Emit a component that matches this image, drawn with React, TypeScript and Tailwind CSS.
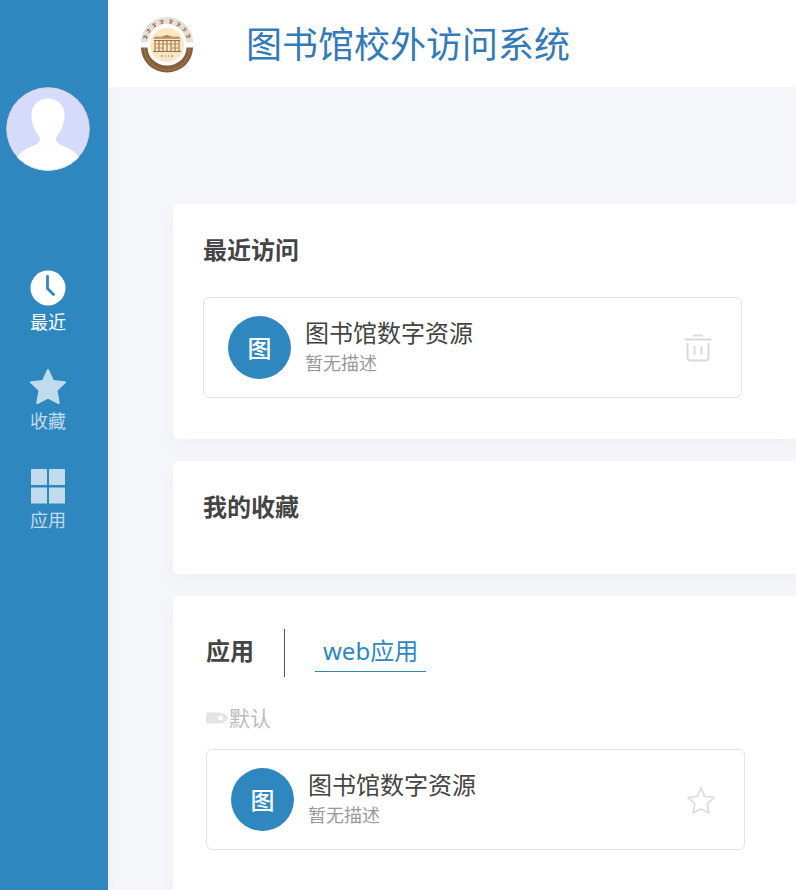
import type { ReactNode } from "react";

interface Resource {
  name: string;
  description: string;
}

const resource: Resource = { name: "图书馆数字资源", description: "暂无描述" };

function ClockIcon() {
  return (
    <svg className="size-9" viewBox="0 0 36 36">
      <circle cx="18" cy="18" r="17.5" fill="currentColor" />
      <path d="M17.5 6.500v12l6 6" fill="none" stroke="#2e88bf" strokeWidth="2.8" strokeLinecap="round" strokeLinejoin="round" />
    </svg>
  );
}

function StarIcon() {
  return (
    <svg className="size-9" viewBox="0 0 36 36" fill="currentColor" stroke="currentColor" strokeWidth="2" strokeLinejoin="round">
      <path d="M18 .8l5 11.200 12 1.300-8.500 8 2.200 12.700L18 28.500 7.300 34l2.200-12.700L1 13.300 13 12z" />
    </svg>
  );
}

function GridIcon() {
  return (
    <svg className="size-9" viewBox="0 0 36 36" fill="currentColor">
      <rect x="1" y="1" width="16" height="16" rx="0.5" />
      <rect x="19" y="1" width="16" height="16" rx="0.5" />
      <rect x="1" y="19.5" width="16" height="16" rx="0.5" />
      <rect x="19" y="19.5" width="16" height="16" rx="0.5" />
    </svg>
  );
}

function TrashIcon() {
  return (
    <svg className="size-7" viewBox="0 0 28 28" fill="none" stroke="#dadada" strokeWidth="2">
      <path d="M9 1.500h10M.5 5.500h27" strokeWidth="2.200" />
      <path d="M3.500 9v14.500a3 3 0 0 0 3 3h15a3 3 0 0 0 3-3V9M10.500 12v8.500M17.500 12v8.500" />
    </svg>
  );
}

function StarOutlineIcon() {
  return (
    <svg className="size-7" viewBox="0 0 28 28" fill="none" stroke="#dcdcdc" strokeWidth="1.7" strokeLinejoin="round">
      <path d="M14 2l3.700 8.300 9.300 1.200-6.800 6.300 1.700 9-7.900-3.800-7.900 3.800 1.700-9L1 11.500l9.300-1.200z" />
    </svg>
  );
}

function TagIcon() {
  return (
    <svg className="h-3 w-[23px]" viewBox="0 0 23 12">
      <path d="M1.500 .5h13.500c2 0 7 3.500 7 5.500s-5 5.500-7 5.500H1.500A1.500 1.500 0 0 1 0 10V2A1.500 1.500 0 0 1 1.500 .5z" fill="#e4e4e4" />
      <circle cx="14.500" cy="6" r="2.500" fill="#fff" />
    </svg>
  );
}

function Avatar() {
  return (
    <svg className="size-[84px] rounded-full" viewBox="0 0 84 84" role="img" aria-label="avatar">
      <circle cx="42" cy="42" r="41.7" fill="#d6dbfb" />
      <path d="M42 11.500c-10 0-16.500 7-16.500 17 0 8 3 15 7 19.500 1.500 2 2 4 1 6-1.500 3-5 4.500-9 6C19 62 14 66 10.500 70 18 79 30 84 42 84s24-5 31.500-14c-3.500-4-8.500-8-14-10-4-1.500-7.500-3-9-6-1-2-.5-4 1-6 4-4.500 7-11.500 7-19.500 0-10-6.500-17-16.500-17z" fill="#fff" />
      <circle cx="42" cy="42" r="41.6" fill="none" stroke="#c9c7a2" strokeWidth="0.7" />
    </svg>
  );
}

const sealMarks = [-72, -54, -34, -13, 10, 31, 51, 70];

function Seal() {
  return (
    <svg className="h-14 w-[54px]" viewBox="0 0 54 56" role="img" aria-label="logo">
      <path d="M1 25.500a26 25.500 0 0 1 52 0h-7a19 18.500 0 0 0-38 0z" fill="#e6dfd8" />
      <path d="M1 30.500a26 25 0 0 0 52 0h-6.500a19.500 18 0 0 1-39 0z" fill="#85603a" />
      <path d="M4.500 31a22.500 22 0 0 0 45 0" fill="none" stroke="#a88760" strokeWidth="1.3" strokeDasharray="1.5 1.5" />
      {sealMarks.map((angle) => (
        <g key={angle} transform={`rotate(${angle} 27 27)`} stroke="#8f7358" strokeWidth="0.9">
          <path d="M25 3l4 .6M27 2v4.500M25.300 6l3.200-1" fill="none" />
        </g>
      ))}
      <circle cx="27" cy="28" r="17" fill="#fbe7c6" />
      {/* library building */}
      <path d="M13 22l2-2.500h24l2 2.500z" fill="#c29b70" />
      <path d="M21.500 20l5.500-2 5.500 2z" fill="#a67a4b" />
      <path d="M14 23.500h26M13 34.500h28M15 23.500v11M19 23.500v11M23 23.500v11M27 23.500v11M31 23.500v11M35 23.500v11M39 23.500v11" fill="none" stroke="#9b7145" strokeWidth="1.1" />
      <path d="M16 27h22M16 31h7M31 31h7" fill="none" stroke="#b98f61" />
      <path d="M21 39h2M25 39h1M28 39h1M31 39h2" stroke="#9b7145" strokeWidth="1.2" />
    </svg>
  );
}

const navItems = [
  { label: "最近", icon: <ClockIcon />, active: true },
  { label: "收藏", icon: <StarIcon />, active: false },
  { label: "应用", icon: <GridIcon />, active: false },
];

function Panel({ className, children }: { className: string; children: ReactNode }) {
  return (
    <section className={`bg-white shadow-[0_8px_20px_rgba(60,60,100,0.03)] ${className}`}>
      {children}
    </section>
  );
}

function ResourceCard({ item, action, label }: { item: Resource; action: ReactNode; label: string }) {
  return (
    <div className="flex w-full max-w-[539px] items-center rounded-md border border-[#e4e4e4] py-[18px] pr-[29px] pl-6">
      <span className="flex size-[63px] shrink-0 items-center justify-center rounded-full bg-[#2e88bf] text-2xl leading-6 font-medium text-white">
        图
      </span>
      <div className="ml-[14px] flex-1 pb-[2px]">
        <h3 className="text-2xl leading-8 text-[#444]">{item.name}</h3>
        <p className="text-lg leading-7 text-[#999]">{item.description}</p>
      </div>
      <button type="button" aria-label={label} className="cursor-pointer">
        {action}
      </button>
    </div>
  );
}

export default function App() {
  return (
    <div className="flex min-h-screen bg-[#f4f6fa] font-['Noto_Sans','Noto_Sans_CJK_SC',sans-serif]">
      <aside className="z-10 w-[108px] shrink-0 bg-[#2e88bf] pt-[87px] pr-3 shadow-[0_0_8px_rgba(0,0,0,0.06)]">
        <div className="flex justify-center">
          <Avatar />
        </div>
        <nav className="mt-[99px] flex flex-col gap-[35px]">
          {navItems.map((item) => (
            <a
              key={item.label}
              href="#"
              className={`flex flex-col items-center gap-1 text-lg leading-6 ${item.active ? "text-white" : "text-[#c0dcec]"}`}
            >
              {item.icon}
              {item.label}
            </a>
          ))}
        </nav>
      </aside>

      <div className="flex min-w-0 flex-1 flex-col">
        <header className="flex h-[87px] items-center bg-white pt-[3px] pl-8">
          <Seal />
          <h1 className="ml-[52px] text-4xl leading-[48px] text-[#337ab7]">图书馆校外访问系统</h1>
        </header>

        <main className="flex flex-1 flex-col gap-[22px] pt-[117px] pl-[65px]">
          <Panel className="rounded-l-md px-[30px] pt-[30px] pb-[41px]">
            <h2 className="text-2xl leading-8 font-bold text-[#444]">最近访问</h2>
            <div className="mt-[31px]">
              <ResourceCard item={resource} action={<TrashIcon />} label="删除" />
            </div>
          </Panel>

          <Panel className="rounded-l-md px-[30px] pt-[30px] pb-[51px]">
            <h2 className="text-2xl leading-8 font-bold text-[#444]">我的收藏</h2>
          </Panel>

          <Panel className="flex-1 rounded-tl-md px-[33px] pt-[33px] pb-10">
            <div className="flex items-center">
              <h2 className="border-r border-[#555] pr-[30px] pb-1 text-2xl leading-[44px] font-bold text-[#444]">应用</h2>
              <button
                type="button"
                className="ml-[30px] cursor-pointer border-b border-[#2e88a8] px-2 pb-1 text-2xl leading-8 text-[#2e88bf]"
              >
                web应用
              </button>
            </div>
            <div className="mt-[26px] mb-4 flex items-center text-[21px] leading-[30px] text-[#bbb]">
              <TagIcon />
              默认
            </div>
            <ResourceCard item={resource} action={<StarOutlineIcon />} label="收藏" />
          </Panel>
        </main>
      </div>
    </div>
  );
}
